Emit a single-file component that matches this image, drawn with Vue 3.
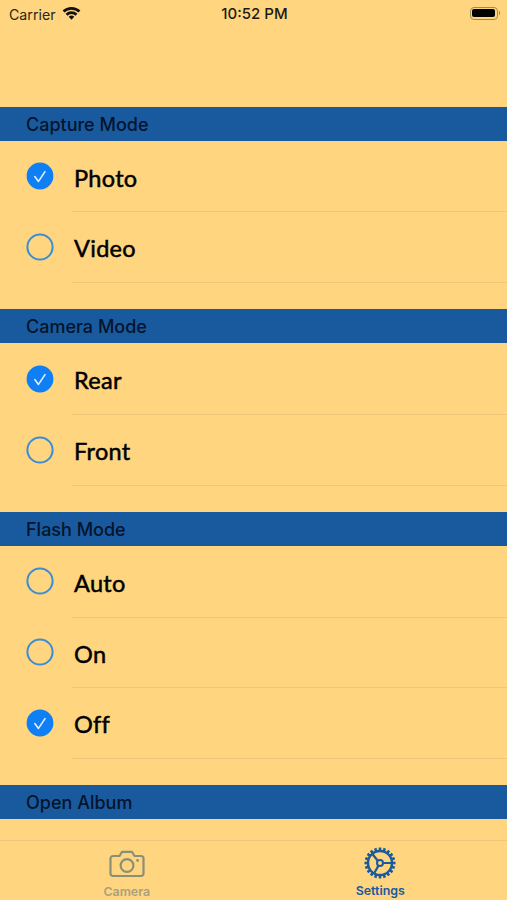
<script setup>
const sections = [
  { title: 'Capture Mode', rows: [{ label: 'Photo', on: true }, { label: 'Video', on: false }] },
  { title: 'Camera Mode', rows: [{ label: 'Rear', on: true }, { label: 'Front', on: false }] },
  { title: 'Flash Mode', rows: [{ label: 'Auto', on: false }, { label: 'On', on: false }, { label: 'Off', on: true }] },
]
const teeth = Array.from({ length: 20 }, (_, i) => i * 18)
</script>

<template>
  <div class="screen">
    <header class="status">
      <div class="status-left">
        <span class="carrier">Carrier</span>
        <svg class="wifi" width="19" height="14" viewBox="0 0 19 14">
          <path d="M0.6 4.6 A12.6 12.6 0 0 1 18.4 4.6 L16.5 6.6 A9.9 9.9 0 0 0 2.5 6.6 Z" fill="#111" />
          <path d="M3.6 7.7 A8.4 8.4 0 0 1 15.4 7.7 L13.5 9.7 A5.7 5.7 0 0 0 5.5 9.7 Z" fill="#111" />
          <path d="M6.7 10.8 A4 4 0 0 1 12.3 10.8 L9.5 13.7 Z" fill="#111" />
        </svg>
      </div>
      <span class="time">10:52 PM</span>
      <div class="status-right">
        <span class="battery"><span class="battery-fill"></span></span>
        <span class="battery-cap"></span>
      </div>
    </header>

    <main class="list">
      <section v-for="s in sections" :key="s.title" class="section">
        <h2 class="section-title">{{ s.title }}</h2>
        <div v-for="r in s.rows" :key="r.label" class="row">
          <span class="radio-wrap">
            <svg v-if="r.on" width="28" height="28" viewBox="0 0 28 28">
              <circle cx="14" cy="14" r="13.4" fill="#0f7ff5" />
              <path d="M8.8 14.6 L12.5 19.4 L19 9.6" fill="none" stroke="#e4eefa" stroke-width="1.6" stroke-linecap="round" stroke-linejoin="round" />
            </svg>
            <svg v-else width="28" height="28" viewBox="0 0 28 28">
              <circle cx="14" cy="14" r="12.6" fill="none" stroke="#3a8dd6" stroke-width="2" />
            </svg>
          </span>
          <span class="row-label">{{ r.label }}</span>
        </div>
      </section>
      <h2 class="section-title">Open Album</h2>
    </main>

    <nav class="tabs">
      <div class="tab tab-off">
        <svg width="36" height="28" viewBox="0 0 36 28" fill="none" stroke="#8a8f78" stroke-width="2.2">
          <path d="M4 6 H10.5 L13 1.8 H23 L25.5 6 H32 A2.5 2.5 0 0 1 34.5 8.5 V23.5 A2.5 2.5 0 0 1 32 26 H4 A2.5 2.5 0 0 1 1.5 23.5 V8.5 A2.5 2.5 0 0 1 4 6 Z" stroke-linejoin="round" />
          <circle cx="18" cy="15.5" r="6.4" />
          <circle cx="28.6" cy="10.4" r="1.4" fill="#8a8f78" stroke="none" />
        </svg>
        <span class="tab-label">Camera</span>
      </div>
      <div class="tab tab-on">
        <svg width="32" height="32" viewBox="0 0 32 32" fill="none" stroke="#1a5a9e">
          <g stroke-width="2.6">
            <line v-for="a in teeth" :key="a" x1="16" y1="0.5" x2="16" y2="4" :transform="`rotate(${a} 16 16)`" />
          </g>
          <circle cx="16" cy="16" r="12" stroke-width="2.4" />
          <circle cx="16" cy="16" r="3" stroke-width="2" />
          <path d="M13.8 13.8 L8 6.5 M14.5 18.6 L10 26.5 M19 16 H28" stroke-width="2.2" />
        </svg>
        <span class="tab-label">Settings</span>
      </div>
    </nav>
  </div>
</template>

<style scoped>
.screen {
  width: 507px;
  height: 900px;
  display: flex;
  flex-direction: column;
  overflow: hidden;
  background: #ffd57f;
  font-family: "Inter", "Liberation Sans", sans-serif;
  color: #000;
}
.status {
  height: 106.6px;
  box-sizing: border-box;
  padding: 4px 7px 0 9px;
  display: grid;
  grid-template-columns: 1fr auto 1fr;
  align-items: start;
  flex: none;
}
.status-left {
  display: flex;
  align-items: center;
  gap: 6px;
  height: 20px;
}
.carrier {
  font-size: 14.2px;
  color: #2a2618;
}
.wifi {
  margin-top: -3px;
}
.time {
  font-size: 15px;
  line-height: 20px;
  font-weight: 500;
  color: #1c1a12;
}
.status-right {
  justify-self: end;
  display: flex;
  align-items: center;
  height: 20px;
  margin-top: -1px;
}
.battery {
  width: 28px;
  height: 13px;
  box-sizing: border-box;
  border: 1px solid #a08a58;
  border-radius: 4px;
  padding: 1.5px;
  display: block;
}
.battery-fill {
  display: block;
  height: 100%;
  background: #000;
  border-radius: 2px;
}
.battery-cap {
  width: 1.5px;
  height: 4px;
  margin-left: 1px;
  background: #a08a58;
  border-radius: 0 1px 1px 0;
}
.list {
  flex: 1;
  min-height: 0;
  overflow: hidden;
}
.section {
  padding-bottom: 27px;
}
.section-title {
  margin: 0;
  height: 34.2px;
  padding-left: 26px;
  background: #195a9f;
  font-size: 18px;
  font-weight: 500;
  line-height: 36.5px;
  color: #04142c;
}
.row {
  height: 70.7px;
  display: flex;
  position: relative;
}
.row::after {
  content: "";
  position: absolute;
  left: 72px;
  right: 0;
  bottom: -1px;
  height: 1px;
  background: #ecc77a;
}
.radio-wrap {
  width: 74px;
  padding: 21.5px 0 0 26px;
  box-sizing: border-box;
  flex: none;
}
.radio-wrap svg {
  display: block;
}
.row-label {
  font-family: "Lato", "Noto Sans", sans-serif;
  font-size: 23.5px;
  line-height: 75px;
  letter-spacing: 0.3px;
  color: #000;
  -webkit-text-stroke: 0.5px #000;
}
.tabs {
  flex: none;
  height: 60px;
  box-sizing: border-box;
  border-top: 1px solid #ecc77a;
  display: flex;
  background: #ffd57f;
}
.tab {
  flex: 1;
  display: flex;
  flex-direction: column;
  align-items: center;
  padding-top: 6px;
}
.tab svg {
  display: block;
}
.tab-off svg {
  margin: 3px 0 2px;
}
.tab-label {
  margin-top: 5px;
  font-size: 12.4px;
  line-height: 14px;
  font-weight: 600;
}
.tab-off .tab-label {
  color: #a8a27c;
}
.tab-on .tab-label {
  color: #1a5a9e;
}
</style>
